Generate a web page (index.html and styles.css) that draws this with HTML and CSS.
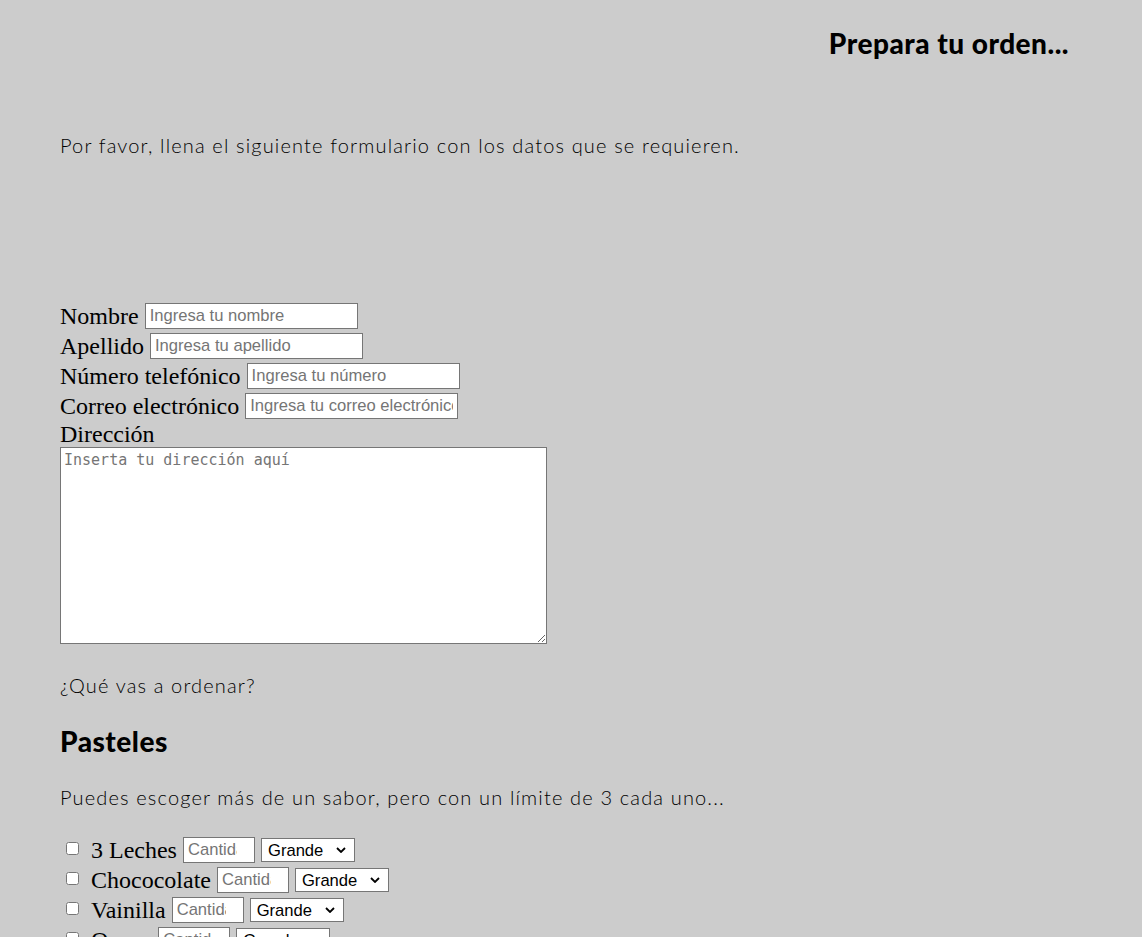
FILE: index.html
```html
<!DOCTYPE html>
<html lang="es">
<head>
<meta charset="utf-8">
<title>Prepara tu orden</title>
<link rel="stylesheet" href="styles.css">
</head>
<body>
<header class="top">
  <h1 class="title">Prepara tu orden...</h1>
</header>
<main class="content">
  <p class="text intro">Por favor, llena el siguiente formulario con los datos que se requieren.</p>
  <form class="order">
    <div class="field"><label for="nombre">Nombre</label><input class="txt w213" id="nombre" type="text" placeholder="Ingresa tu nombre"></div>
    <div class="field"><label for="apellido">Apellido</label><input class="txt w213" id="apellido" type="text" placeholder="Ingresa tu apellido"></div>
    <div class="field"><label for="tel">Número telefónico</label><input class="txt w213" id="tel" type="tel" placeholder="Ingresa tu número"></div>
    <div class="field"><label for="correo">Correo electrónico</label><input class="txt w213" id="correo" type="email" placeholder="Ingresa tu correo electrónico"></div>
    <label class="block-label" for="dir">Dirección</label>
    <textarea id="dir" class="address" placeholder="Inserta tu dirección aquí"></textarea>

    <p class="text question">¿Qué vas a ordenar?</p>
    <h2 class="subtitle">Pasteles</h2>
    <p class="text note">Puedes escoger más de un sabor, pero con un límite de 3 cada uno...</p>

    <div class="item"><input class="check" type="checkbox" id="p1"><label for="p1">3 Leches</label><input class="txt qty" type="number" placeholder="Cantidad"><span class="sel"><select><option>Grande</option><option>Mediano</option><option>Chico</option></select><svg class="chev" viewBox="0 0 10 6" width="10" height="6"><path d="M1 1l4 4 4-4" fill="none" stroke="#000" stroke-width="1.8"/></svg></span></div>
    <div class="item"><input class="check" type="checkbox" id="p2"><label for="p2">Chococolate</label><input class="txt qty" type="number" placeholder="Cantidad"><span class="sel"><select><option>Grande</option><option>Mediano</option><option>Chico</option></select><svg class="chev" viewBox="0 0 10 6" width="10" height="6"><path d="M1 1l4 4 4-4" fill="none" stroke="#000" stroke-width="1.8"/></svg></span></div>
    <div class="item"><input class="check" type="checkbox" id="p3"><label for="p3">Vainilla</label><input class="txt qty" type="number" placeholder="Cantidad"><span class="sel"><select><option>Grande</option><option>Mediano</option><option>Chico</option></select><svg class="chev" viewBox="0 0 10 6" width="10" height="6"><path d="M1 1l4 4 4-4" fill="none" stroke="#000" stroke-width="1.8"/></svg></span></div>
    <div class="item"><input class="check" type="checkbox" id="p4"><label for="p4">Queso</label><input class="txt qty" type="number" placeholder="Cantidad"><span class="sel"><select><option>Grande</option><option>Mediano</option><option>Chico</option></select><svg class="chev" viewBox="0 0 10 6" width="10" height="6"><path d="M1 1l4 4 4-4" fill="none" stroke="#000" stroke-width="1.8"/></svg></span></div>
  </form>
</main>
</body>
</html>
```
FILE: styles.css
```css
html, body {
  margin: 0;
  padding: 0;
  background: #cccccc;
}

body {
  font-family: "Liberation Serif", "Times New Roman", serif;
  color: #000;
}

.top {
  display: flex;
  justify-content: flex-end;
  padding: 27px 73px 0 60px;
}

.title {
  margin: 0;
  font-family: Lato, "Noto Sans", sans-serif;
  font-weight: 900;
  font-size: 28px;
  line-height: 32px;
  letter-spacing: 0.5px;
  color: #000;
}

.content {
  padding: 0 60px 20px 60px;
}

.text {
  margin: 0;
  font-family: Lato, "Noto Sans", sans-serif;
  font-weight: 300;
  font-size: 20px;
  line-height: 24px;
  letter-spacing: 1.15px;
  color: #000;
}

.intro {
  margin-top: 74px;
}

.order {
  margin-top: 144px;
  display: flex;
  flex-direction: column;
  align-items: flex-start;
}

.field {
  display: flex;
  align-items: center;
  gap: 6px;
  height: 30px;
  font-size: 24px;
}

.txt {
  box-sizing: border-box;
  height: 26px;
  margin: 0;
  padding: 1px 4px;
  border: 1px solid #767676;
  border-radius: 0;
  background: #fff;
  font-family: "Liberation Sans", Arial, sans-serif;
  font-size: 16.6px;
  color: #000;
}

.txt::placeholder {
  color: #757575;
}

.w213 {
  width: 213px;
}

.block-label {
  display: block;
  font-size: 24px;
  line-height: 26px;
}

.address {
  display: block;
  box-sizing: border-box;
  width: 487px;
  height: 197px;
  margin: 0;
  padding: 2px 3px;
  border: 1px solid #767676;
  background: #fff;
  font-family: "DejaVu Sans Mono", "Liberation Mono", monospace;
  font-size: 15px;
  line-height: 20px;
  resize: both;
}

.address::placeholder {
  color: #757575;
}

.question {
  margin-top: 29px;
}

.subtitle {
  margin: 29px 0 0 0;
  font-family: Lato, "Noto Sans", sans-serif;
  font-weight: 900;
  font-size: 28px;
  line-height: 30px;
  letter-spacing: 0.5px;
}

.note {
  margin-top: 29px;
  margin-bottom: 26px;
}

.item {
  display: flex;
  align-items: center;
  height: 30px;
  font-size: 24px;
  flex-shrink: 0;
}

.check {
  width: 13px;
  height: 13px;
  margin: 0 12px 3px 6px;
}

.item label {
  margin-right: 6px;
}

.qty {
  width: 72px;
  padding: 1px 17px 1px 4px;
  -moz-appearance: textfield;
  appearance: textfield;
}

.qty::-webkit-outer-spin-button,
.qty::-webkit-inner-spin-button {
  -webkit-appearance: none;
  margin: 0;
}

.sel {
  position: relative;
  display: inline-flex;
  margin-left: 6px;
}

.sel select {
  -webkit-appearance: none;
  appearance: none;
  box-sizing: border-box;
  width: 94px;
  height: 24px;
  margin: 0;
  padding: 0 20px 0 6px;
  border: 1px solid #767676;
  border-radius: 0;
  background: #fff;
  font-family: "Liberation Sans", Arial, sans-serif;
  font-size: 16.6px;
  color: #000;
}

.chev {
  position: absolute;
  right: 9px;
  top: 9px;
  pointer-events: none;
}
```
